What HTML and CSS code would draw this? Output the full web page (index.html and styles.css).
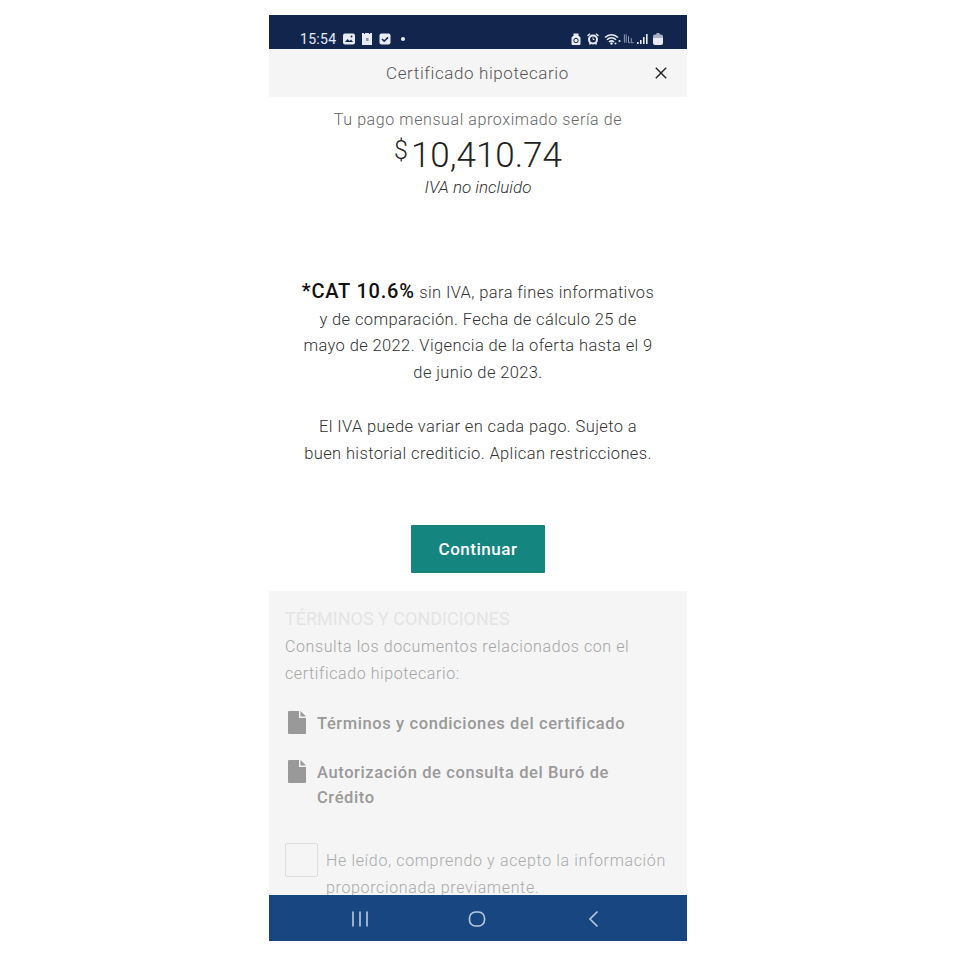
FILE: index.html
```html
<!DOCTYPE html>
<html lang="es">
<head>
    <meta charset="UTF-8">
    <meta name="viewport" content="width=device-width, initial-scale=1.0">
    <title>Certificado hipotecario</title>
    <link rel="stylesheet" href="styles.css">
</head>
<body>
    <div class="phone">
        <div class="status-bar">
            <div class="status-left">
                <span class="clock">15:54</span>
                <svg class="status-icon" viewBox="0 0 12 12"><rect x="0" y="0.5" width="12" height="11" rx="2" fill="#e8ecf2"/><path d="M2 9l2.5-3 2 2 1.5-1.5L10 9z" fill="#12264d"/><circle cx="8.5" cy="3.5" r="1" fill="#12264d"/></svg>
                <svg class="status-icon" viewBox="0 0 12 12"><path d="M1 0h2v1h1V0h4v1h1V0h2v12H1z" fill="#e8ecf2"/><rect x="5" y="5" width="2.5" height="3" fill="#8a94a8"/></svg>
                <svg class="status-icon" viewBox="0 0 12 12"><rect x="0.5" y="0.5" width="11" height="11" rx="2" fill="#e8ecf2"/><path d="M3 6l2.2 2.2L9 4.4" fill="none" stroke="#12264d" stroke-width="1.6"/></svg>
                <span class="status-dot"></span>
            </div>
            <div class="status-right">
                <svg class="status-icon" viewBox="0 0 12 12"><path d="M3.5 0.500h5v2l2 2V11a1 1 0 0 1-1 1h-7a1 1 0 0 1-1-1V4.500l2-2z" fill="#e8ecf2"/><circle cx="6" cy="7.500" r="2.200" fill="none" stroke="#12264d"/></svg>
                <svg class="status-icon" viewBox="0 0 12 12"><circle cx="6" cy="6.500" r="4" fill="#12264d" stroke="#e8ecf2" stroke-width="2"/><path d="M0.500 3L3 0.800M11.500 3L9 0.800M2.500 11.500l1-1.500M9.500 11.500l-1-1.500" stroke="#e8ecf2" stroke-width="1.500"/><path d="M6 4.500v2h1.500" stroke="#e8ecf2" fill="none"/></svg>
                <svg class="status-wifi" viewBox="0 0 18 12"><path d="M1 4.500c3.800-3.800 9.200-3.800 13 0M3 6.800c2.600-2.600 6.400-2.600 9 0M5 9c1.400-1.300 3.600-1.300 5 0" fill="none" stroke="#e8ecf2" stroke-width="1.500"/><circle cx="7.500" cy="10.500" r="1.200" fill="#e8ecf2"/><circle cx="11.500" cy="10.500" r="1" fill="#e8ecf2"/><circle cx="15.500" cy="8" r="1" fill="#e8ecf2"/></svg>
                <svg class="status-lte" viewBox="0 0 12 12"><path d="M1.500 1v9M3.500 1v9M6 3v7M6 10h2M9 5v5h2.500" fill="none" stroke="#9aa5b9" stroke-width="1"/></svg>
                <svg class="status-signal" viewBox="0 0 11 12"><rect x="0" y="9" width="1.600" height="2" fill="#e8ecf2"/><rect x="3" y="7" width="1.600" height="4" fill="#e8ecf2"/><rect x="6" y="4" width="1.600" height="7" fill="#e8ecf2"/><rect x="9" y="1" width="1.600" height="10" fill="#e8ecf2"/></svg>
                <svg class="status-battery" viewBox="0 0 10 12"><path d="M3.500 0h3v1.500H8a2 2 0 0 1 2 2V5H0V3.500a2 2 0 0 1 2-2h1.500z" fill="#aab3c4"/><path d="M0 5h10v5a2 2 0 0 1-2 2H2a2 2 0 0 1-2-2z" fill="#e8ecf2"/></svg>
            </div>
        </div>

        <div class="app-header">
            <span class="app-title">Certificado hipotecario</span>
            <svg class="close-icon" viewBox="0 0 12 12"><path d="M0.800 0.800l10.400 10.400M11.200 0.800L0.800 11.200" stroke="#222" stroke-width="1.400" fill="none"/></svg>
        </div>

        <div class="content">
            <div class="payment">
                <p class="payment-label">Tu pago mensual aproximado sería de</p>
                <p class="payment-amount"><span class="currency">$</span>10,410.74</p>
                <p class="payment-note">IVA no incluido</p>
            </div>

            <div class="legal">
                <p><strong>*CAT 10.6%</strong> sin IVA, para fines informativos y de comparación. Fecha de cálculo 25 de mayo de 2022. Vigencia de la oferta hasta el 9 de junio de 2023.</p>
                <p>El IVA puede variar en cada pago. Sujeto a buen historial crediticio. Aplican restricciones.</p>
            </div>

            <div class="actions">
                <button class="btn-continue">Continuar</button>
            </div>

            <div class="terms">
                <h3 class="terms-title">TÉRMINOS Y CONDICIONES</h3>
                <p class="terms-intro">Consulta los documentos relacionados con el certificado hipotecario:</p>
                <div class="doc-item">
                    <svg class="doc-icon" viewBox="0 0 18 23"><path d="M1 0h10v7h7v15a1 1 0 0 1-1 1H1a1 1 0 0 1-1-1V1a1 1 0 0 1 1-1zM12.500 0L18 5.500h-5.500z" fill="#999"/></svg>
                    <span>Términos y condiciones del certificado</span>
                </div>
                <div class="doc-item">
                    <svg class="doc-icon" viewBox="0 0 18 23"><path d="M1 0h10v7h7v15a1 1 0 0 1-1 1H1a1 1 0 0 1-1-1V1a1 1 0 0 1 1-1zM12.500 0L18 5.500h-5.500z" fill="#999"/></svg>
                    <span>Autorización de consulta del Buró de Crédito</span>
                </div>
                <div class="accept">
                    <span class="checkbox"></span>
                    <span class="accept-text">He leído, comprendo y acepto la información proporcionada previamente.</span>
                </div>
            </div>
        </div>

        <div class="nav-bar">
            <svg class="nav-icon" viewBox="0 0 18 18"><path d="M2 1.500v15M9 1.500v15M16 1.500v15" stroke="#b9cbe0" stroke-width="1.600" fill="none"/></svg>
            <svg class="nav-icon" viewBox="0 0 18 18"><rect x="1.500" y="2" width="15" height="14" rx="6" stroke="#b9cbe0" stroke-width="1.600" fill="none"/></svg>
            <svg class="nav-icon" viewBox="0 0 18 18"><path d="M12.500 1.500L5 9l7.500 7.500" stroke="#b9cbe0" stroke-width="1.600" fill="none"/></svg>
        </div>
    </div>
</body>
</html>
```

FILE: styles.css
```css
body {
    margin: 0;
    background-color: #fff;
    font-family: "Roboto", "Liberation Sans", sans-serif;
}
p {
    margin: 0;
}
.phone {
    width: 418px;
    height: 926px;
    margin: 15px 0 0 269px;
    display: flex;
    flex-direction: column;
    overflow: hidden;
}
.status-bar {
    height: 34px;
    flex: none;
    background-color: #12264d;
    display: flex;
    justify-content: space-between;
    align-items: center;
    padding: 13px 24px 0 31px;
    box-sizing: border-box;
}
.status-left, .status-right {
    display: flex;
    align-items: center;
}
.status-left {
    gap: 6px;
}
.status-right {
    gap: 5px;
}
.clock {
    color: #e8ecf2;
    font-size: 14px;
    letter-spacing: 0.3px;
    margin-right: 1px;
}
.status-icon {
    width: 12px;
    height: 12px;
}
.status-dot {
    width: 4px;
    height: 4px;
    margin-left: 4px;
    border-radius: 50%;
    background-color: #e8ecf2;
}
.status-wifi {
    width: 18px;
    height: 12px;
}
.status-lte {
    width: 11px;
    height: 12px;
    margin-left: -4px;
}
.status-signal {
    width: 11px;
    height: 12px;
    margin-left: -2px;
}
.status-battery {
    width: 10px;
    height: 12px;
}
.app-header {
    height: 48px;
    flex: none;
    background-color: #f5f5f5;
    display: flex;
    align-items: center;
    justify-content: center;
    position: relative;
}
.app-title {
    color: #555;
    font-size: 17px;
    font-weight: 300;
    letter-spacing: 0.6px;
    margin-left: -1px;
}
.close-icon {
    position: absolute;
    right: 20px;
    top: 18px;
    width: 12px;
    height: 12px;
}
.content {
    flex: 1;
    min-height: 0;
    overflow: hidden;
}
.payment {
    text-align: center;
    padding-top: 12px;
}
.payment-label {
    color: #666;
    font-size: 16px;
    font-weight: 300;
    letter-spacing: 0.6px;
    line-height: 22px;
}
.payment-amount {
    color: #222;
    font-size: 35px;
    font-weight: 300;
    line-height: 48px;
    margin-top: -4px;
}
.currency {
    font-size: 25px;
    vertical-align: 8px;
    margin-right: 3px;
}
.payment-note {
    color: #333;
    font-size: 17px;
    font-weight: 300;
    font-style: italic;
    line-height: 22px;
    margin-top: -4px;
}
.legal {
    margin-top: 82px;
    padding: 0 32px;
    text-align: center;
    color: #333;
    font-size: 16.5px;
    font-weight: 300;
    letter-spacing: 0.38px;
    line-height: 26.7px;
}
.legal p {
    margin-bottom: 27px;
}
.legal strong {
    color: #111;
    font-size: 20px;
    font-weight: 500;
    letter-spacing: 0.8px;
    line-height: 1;
}
.actions {
    display: flex;
    justify-content: center;
    margin-top: 58px;
}
.btn-continue {
    width: 134px;
    height: 48px;
    border: 0;
    border-radius: 1px;
    background-color: #14857f;
    color: #fff;
    font-family: inherit;
    font-size: 17px;
    font-weight: 500;
    letter-spacing: 0.5px;
}
.terms {
    margin-top: 18px;
    padding: 16px 16px 40px;
    background-color: #f5f5f5;
}
.terms-title {
    margin: 0;
    color: #e4e4e4;
    font-size: 18px;
    font-weight: 400;
    line-height: 24px;
}
.terms-intro {
    color: #a4a4a4;
    font-size: 16px;
    font-weight: 300;
    letter-spacing: 0.6px;
    line-height: 27px;
    margin-top: 2px;
}
.doc-item {
    display: flex;
    gap: 11px;
    margin: 24px 30px 0 3px;
    color: #999;
    font-size: 16.5px;
    font-weight: 500;
    letter-spacing: 0.6px;
    line-height: 25px;
}
.doc-icon {
    width: 18px;
    height: 23px;
    flex: none;
}
.accept {
    display: flex;
    gap: 8px;
    margin-top: 33px;
}
.checkbox {
    width: 33px;
    height: 34px;
    flex: none;
    box-sizing: border-box;
    border: 1px solid #ddd;
    border-radius: 2px;
}
.accept-text {
    color: #aaa;
    font-size: 16px;
    font-weight: 300;
    letter-spacing: 0.65px;
    line-height: 27px;
    padding-top: 4px;
}
.nav-bar {
    height: 46px;
    flex: none;
    background-color: #174680;
    display: flex;
    align-items: center;
    justify-content: space-around;
    box-sizing: border-box;
    padding: 2px 34px 0 32px;
}
.nav-icon {
    width: 18px;
    height: 18px;
}
```
